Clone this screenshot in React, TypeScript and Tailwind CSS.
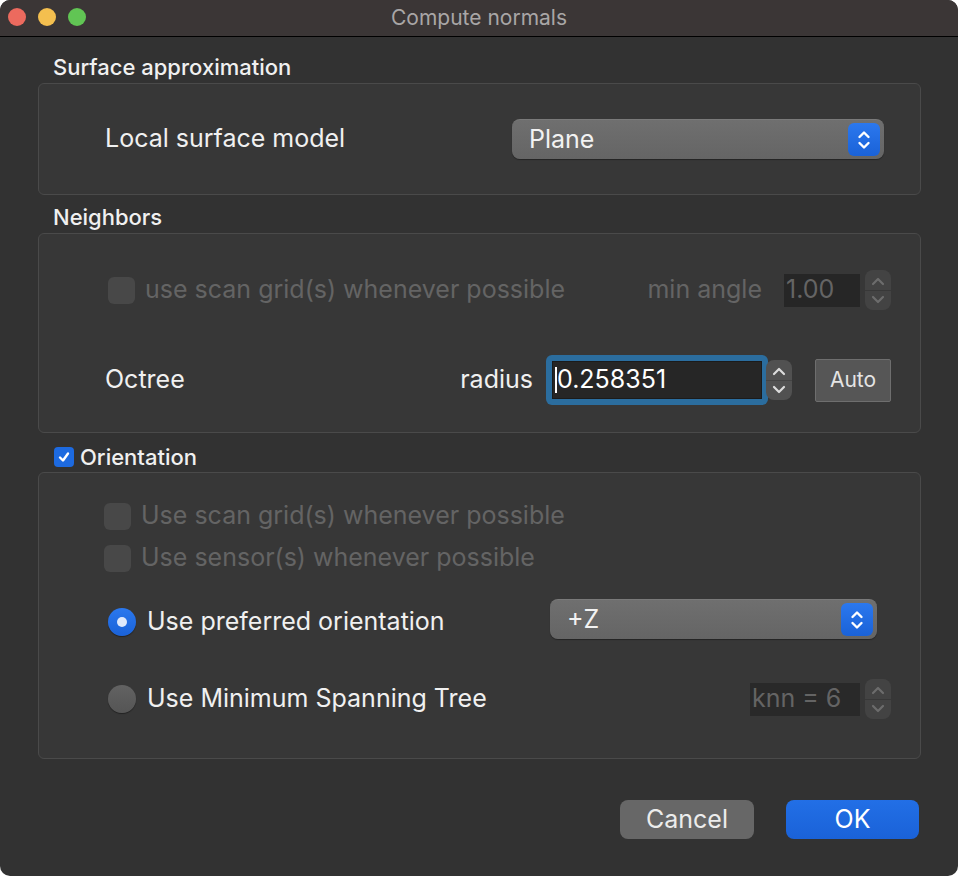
import React from 'react'

const font = { fontFamily: 'Inter, "Noto Sans", "Liberation Sans", sans-serif' }

const Chevrons = ({ className = '' }: { className?: string }) => (
  <svg viewBox="0 0 14 22" className={className} fill="none" stroke="currentColor" strokeWidth="2.4" strokeLinecap="round" strokeLinejoin="round">
    <path d="M2.5 8 L7 3.5 L11.5 8" />
    <path d="M2.5 14 L7 18.5 L11.5 14" />
  </svg>
)

const Stepper = ({ disabled = false }: { disabled?: boolean }) => (
  <div
    className={`flex h-[40px] w-[26px] flex-col items-center justify-center rounded-[8px] ${
      disabled ? 'bg-[#434343] text-[#6c6c6c]' : 'bg-[#515151] text-[#dcdcdc]'
    }`}
  >
    <svg viewBox="0 0 14 9" className="h-[9px] w-[14px]" fill="none" stroke="currentColor" strokeWidth="2.2" strokeLinecap="round" strokeLinejoin="round">
      <path d="M2 7 L7 2 L12 7" />
    </svg>
    <div className={`my-[4px] h-px w-full ${disabled ? 'bg-[#383838]' : 'bg-[#444]'}`} />
    <svg viewBox="0 0 14 9" className="h-[9px] w-[14px]" fill="none" stroke="currentColor" strokeWidth="2.2" strokeLinecap="round" strokeLinejoin="round">
      <path d="M2 2 L7 7 L12 2" />
    </svg>
  </div>
)

const Select = ({ value, width }: { value: string; width: string }) => (
  <div className={`flex h-[40px] ${width} items-center justify-between rounded-[8px] border-t border-[#7a7a7a] bg-gradient-to-b from-[#6f6f6f] to-[#656565] pl-[17px] pr-[4px] shadow-[0_1px_1px_rgba(0,0,0,0.35)]`}>
    <span className="text-[25px] text-[#f2f2f2]">{value}</span>
    <div className="flex h-[33px] w-[32px] items-center justify-center rounded-[6px] bg-gradient-to-b from-[#2b78ee] to-[#1a62d8] text-white">
      <Chevrons className="h-[22px] w-[14px]" />
    </div>
  </div>
)

const DisabledCheck = () => <div className="h-[27px] w-[27px] shrink-0 rounded-[6px] bg-[#484848]" />

const Group = ({ className, children }: { className: string; children: React.ReactNode }) => (
  <div className={`rounded-[6px] border border-[#4a4a4a] bg-[#373737] ${className}`}>{children}</div>
)

export default function App() {
  return (
    <div style={font} className="h-[876px] w-[958px] overflow-hidden rounded-[10px] bg-[#323232] text-[#f0f0f0]">
      {/* title bar */}
      <div className="relative flex h-[37px] items-center justify-center border-b border-black bg-[#3b3636]">
        <div className="absolute left-[8px] top-[8px] flex gap-[12px]">
          <div className="h-[18px] w-[18px] rounded-full bg-[#ec6a5e]" />
          <div className="h-[18px] w-[18px] rounded-full bg-[#f4bf4f]" />
          <div className="h-[18px] w-[18px] rounded-full bg-[#61c554]" />
        </div>
        <span className="text-[21px] text-[#a9a6a6]">Compute normals</span>
      </div>

      <div className="pl-[38px] pr-[37px]">
        {/* Surface approximation */}
        <div className="pl-[15px] pt-[18px] text-[22px] font-medium leading-[24px]">Surface approximation</div>
        <Group className="mt-[4px] flex h-[112px] items-center justify-between pl-[66px] pr-[36px]">
          <span className="text-[25px]">Local surface model</span>
          <Select value="Plane" width="w-[372px]" />
        </Group>

        {/* Neighbors */}
        <div className="mt-[10px] pl-[15px] text-[22px] font-medium leading-[24px]">Neighbors</div>
        <Group className="mt-[4px] h-[200px] pl-[69px] pr-[29px] pt-[36px]">
          <div className="flex h-[40px] items-center">
            <DisabledCheck />
            <span className="ml-[10px] text-[25px] text-[#646464]">use scan grid(s) whenever possible</span>
            <span className="ml-auto text-[25px] text-[#646464]">min angle</span>
            <div className="ml-[22px] flex h-[33px] w-[76px] items-center bg-[#262626] pl-[2px] text-[25px] text-[#646464]">1.00</div>
            <div className="ml-[5px]">
              <Stepper disabled />
            </div>
          </div>
          <div className="mt-[45px] flex h-[50px] items-center">
            <span className="-ml-[3px] text-[25px]">Octree</span>
            <span className="ml-auto text-[25px]">radius</span>
            <div className="ml-[13px] flex h-[50px] w-[222px] items-center rounded-[6px] bg-[#2b6d9e] p-[6px]">
              <div className="flex h-full w-full items-center border border-[#1b1b1b] bg-[#262626] pl-[2px]">
                <div className="h-[26px] w-[2px] bg-white" />
                <span className="text-[25px] text-white">0.258351</span>
              </div>
            </div>
            <div className="-ml-[2px]">
              <Stepper />
            </div>
            <div className="ml-[23px] flex h-[43px] w-[76px] items-center justify-center rounded-[2px] border border-[#6e6e6e] bg-[#565656] text-[21px] text-[#e4e4e4]">
              Auto
            </div>
          </div>
        </Group>

        {/* Orientation */}
        <div className="mt-[12px] flex h-[24px] items-center pl-[16px]">
          <div className="flex h-[20px] w-[20px] items-center justify-center rounded-[4px] bg-[#1d6ae0]">
            <svg viewBox="0 0 14 14" className="h-[14px] w-[14px]" fill="none" stroke="white" strokeWidth="2.4" strokeLinecap="round" strokeLinejoin="round">
              <path d="M3 7.5 L6 10.5 L11 3.5" />
            </svg>
          </div>
          <span className="ml-[6px] text-[22px] font-medium">Orientation</span>
        </div>
        <Group className="mt-[3px] h-[287px] pl-[65px] pr-[29px] pt-[26px]">
          <div className="flex h-[34px] items-center">
            <DisabledCheck />
            <span className="ml-[10px] text-[25px] text-[#646464]">Use scan grid(s) whenever possible</span>
          </div>
          <div className="mt-[8px] flex h-[34px] items-center">
            <DisabledCheck />
            <span className="ml-[10px] text-[25px] text-[#646464]">Use sensor(s) whenever possible</span>
          </div>
          <div className="mt-[24px] flex h-[40px] items-center">
            <div className="flex translate-y-[3px] items-center">
              <div className="ml-[4px] flex h-[28px] w-[28px] items-center justify-center rounded-full bg-gradient-to-b from-[#2b78ee] to-[#1a62d8] shadow-[0_1px_1px_rgba(0,0,0,0.4)]">
                <div className="h-[10px] w-[10px] rounded-full bg-[#dfe9fb]" />
              </div>
              <span className="ml-[11px] text-[25px]">Use preferred orientation</span>
            </div>
            <div className="ml-auto mr-[14px]">
              <Select value="+Z" width="w-[327px]" />
            </div>
          </div>
          <div className="mt-[40px] flex h-[40px] items-center">
            <div className="ml-[4px] h-[28px] w-[28px] rounded-full bg-gradient-to-b from-[#626262] to-[#555555] shadow-[0_1px_1px_rgba(0,0,0,0.4)]" />
            <span className="ml-[11px] text-[25px]">Use Minimum Spanning Tree</span>
            <div className="ml-auto flex h-[33px] w-[110px] items-center bg-[#292929] pl-[2px] text-[25px] text-[#646464]">knn = 6</div>
            <div className="ml-[5px]">
              <Stepper disabled />
            </div>
          </div>
        </Group>

        {/* buttons */}
        <div className="mt-[41px] flex justify-end gap-[32px] pr-[2px]">
          <div className="flex h-[39px] w-[134px] items-center justify-center rounded-[8px] bg-[#676767] text-[25px] text-[#ececec]">Cancel</div>
          <div className="flex h-[39px] w-[133px] items-center justify-center rounded-[8px] bg-gradient-to-b from-[#226fe6] to-[#1a62d8] text-[25px] text-white">OK</div>
        </div>
      </div>
    </div>
  )
}
